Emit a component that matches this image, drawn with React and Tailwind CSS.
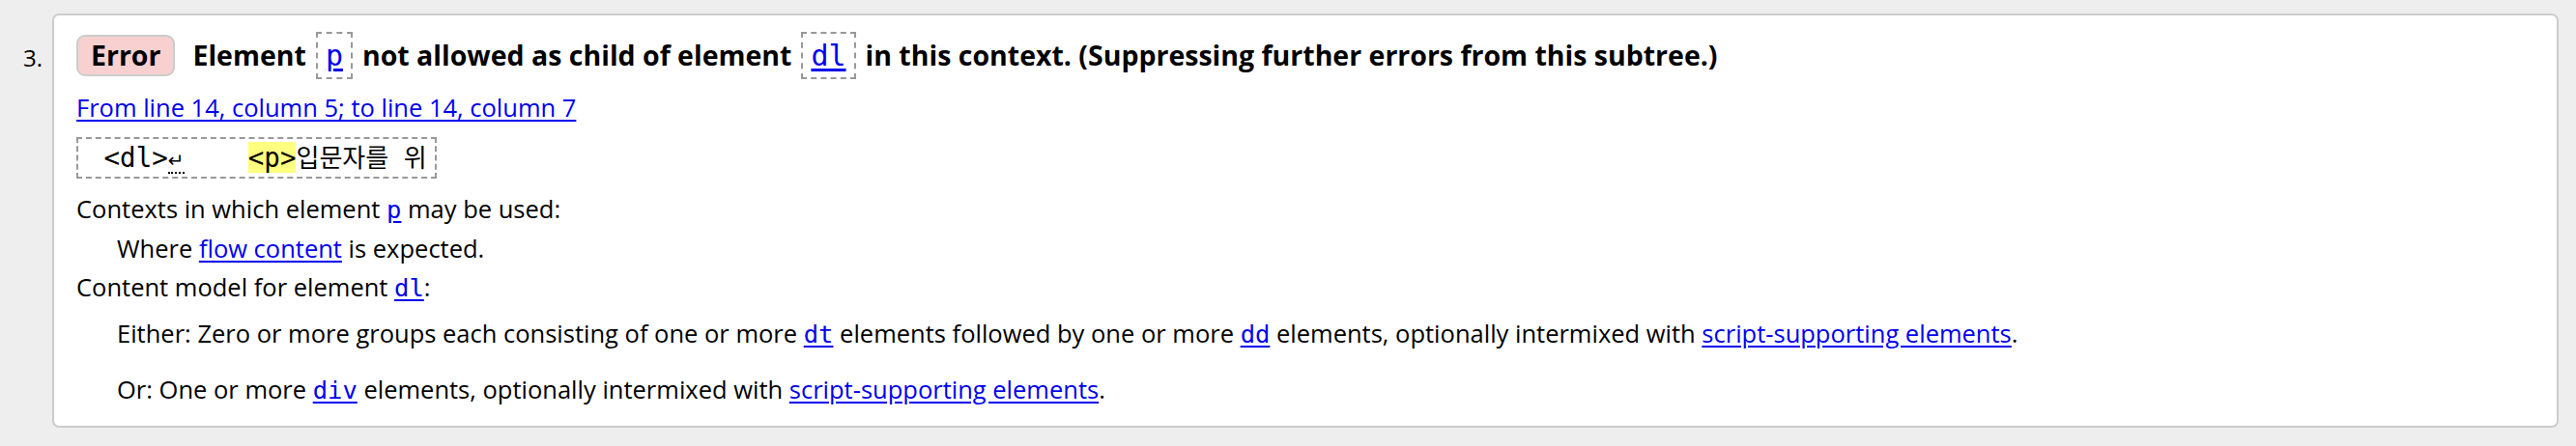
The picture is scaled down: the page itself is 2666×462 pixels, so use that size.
const sans = "font-['Open_Sans','Noto_Sans_CJK_KR',sans-serif]";
const mono = "font-['DejaVu_Sans_Mono','Noto_Sans_CJK_KR',monospace]";

function Code({ children }) {
  return (
    <a href="#" className={`${mono} font-normal text-[#0000ee] underline underline-offset-[3px]`}>
      {children}
    </a>
  );
}

function BoxCode({ children }) {
  return (
    <span className="inline-flex h-[49px] items-center border-2 border-dashed border-[#999] px-[8px] text-[30px]">
      <Code>{children}</Code>
    </span>
  );
}

function Link({ children }) {
  return (
    <a href="#" className="text-[#0000ee] underline underline-offset-[3px]">
      {children}
    </a>
  );
}

export default function App() {
  return (
    <div className={`${sans} h-[462px] w-full bg-[#eeeeee] pt-[14px] pr-[18px] text-black`}>
      <div className="flex">
        <div className="w-[54px] shrink-0 pt-[34px] pr-[10px] text-right text-[24px] leading-none">3.</div>
        <div className="h-[429px] flex-1 rounded-[7px] border-2 border-[#cccccc] bg-white pl-[23px] pt-[17px]">
          <div className="flex items-center gap-[18px] text-[28.5px] font-bold">
            <span className="flex h-[43px] items-center rounded-[9px] border-2 border-[#cccccc] bg-[#f8d0d0] px-[13px]">
              Error
            </span>
            <span className="flex items-center gap-[10px] whitespace-nowrap">
              Element <BoxCode>p</BoxCode> not allowed as child of element <BoxCode>dl</BoxCode> in this context.
              (Suppressing further errors from this subtree.)
            </span>
          </div>

          <div className="mt-[14px] text-[25.5px] leading-[30px]">
            <Link>From line 14, column 5; to line 14, column 7</Link>
          </div>

          <div className="mt-[16px] inline-flex h-[43px] items-center border-2 border-dashed border-[#999] pl-[10px] pr-[8px]">
            <span className={`${mono} whitespace-pre text-[27.5px] leading-none`}>
              {" <dl>"}
              <span className="border-b-2 border-dotted border-black font-['DejaVu_Sans',sans-serif] text-[20px]">↵</span>
              {"    "}
              <span className="bg-[#ffff80]">{"<p>"}</span>
              <span className="text-[26px]">입문자를 위</span>
            </span>
          </div>

          <div className="mt-[11px] text-[25.5px] leading-[40px]">
            <div>
              Contexts in which element <Code>p</Code> may be used:
            </div>
            <div className="pl-[42px]">
              Where <Link>flow content</Link> is expected.
            </div>
            <div>
              Content model for element <Code>dl</Code>:
            </div>
            <div className="mt-[7px] pl-[42px]">
              Either: Zero or more groups each consisting of one or more <Code>dt</Code> elements followed by one or
              more <Code>dd</Code> elements, optionally intermixed with <Link>script-supporting elements</Link>.
            </div>
            <div className="mt-[17px] pl-[42px]">
              Or: One or more <Code>div</Code> elements, optionally intermixed with{" "}
              <Link>script-supporting elements</Link>.
            </div>
          </div>
        </div>
      </div>
    </div>
  );
}
